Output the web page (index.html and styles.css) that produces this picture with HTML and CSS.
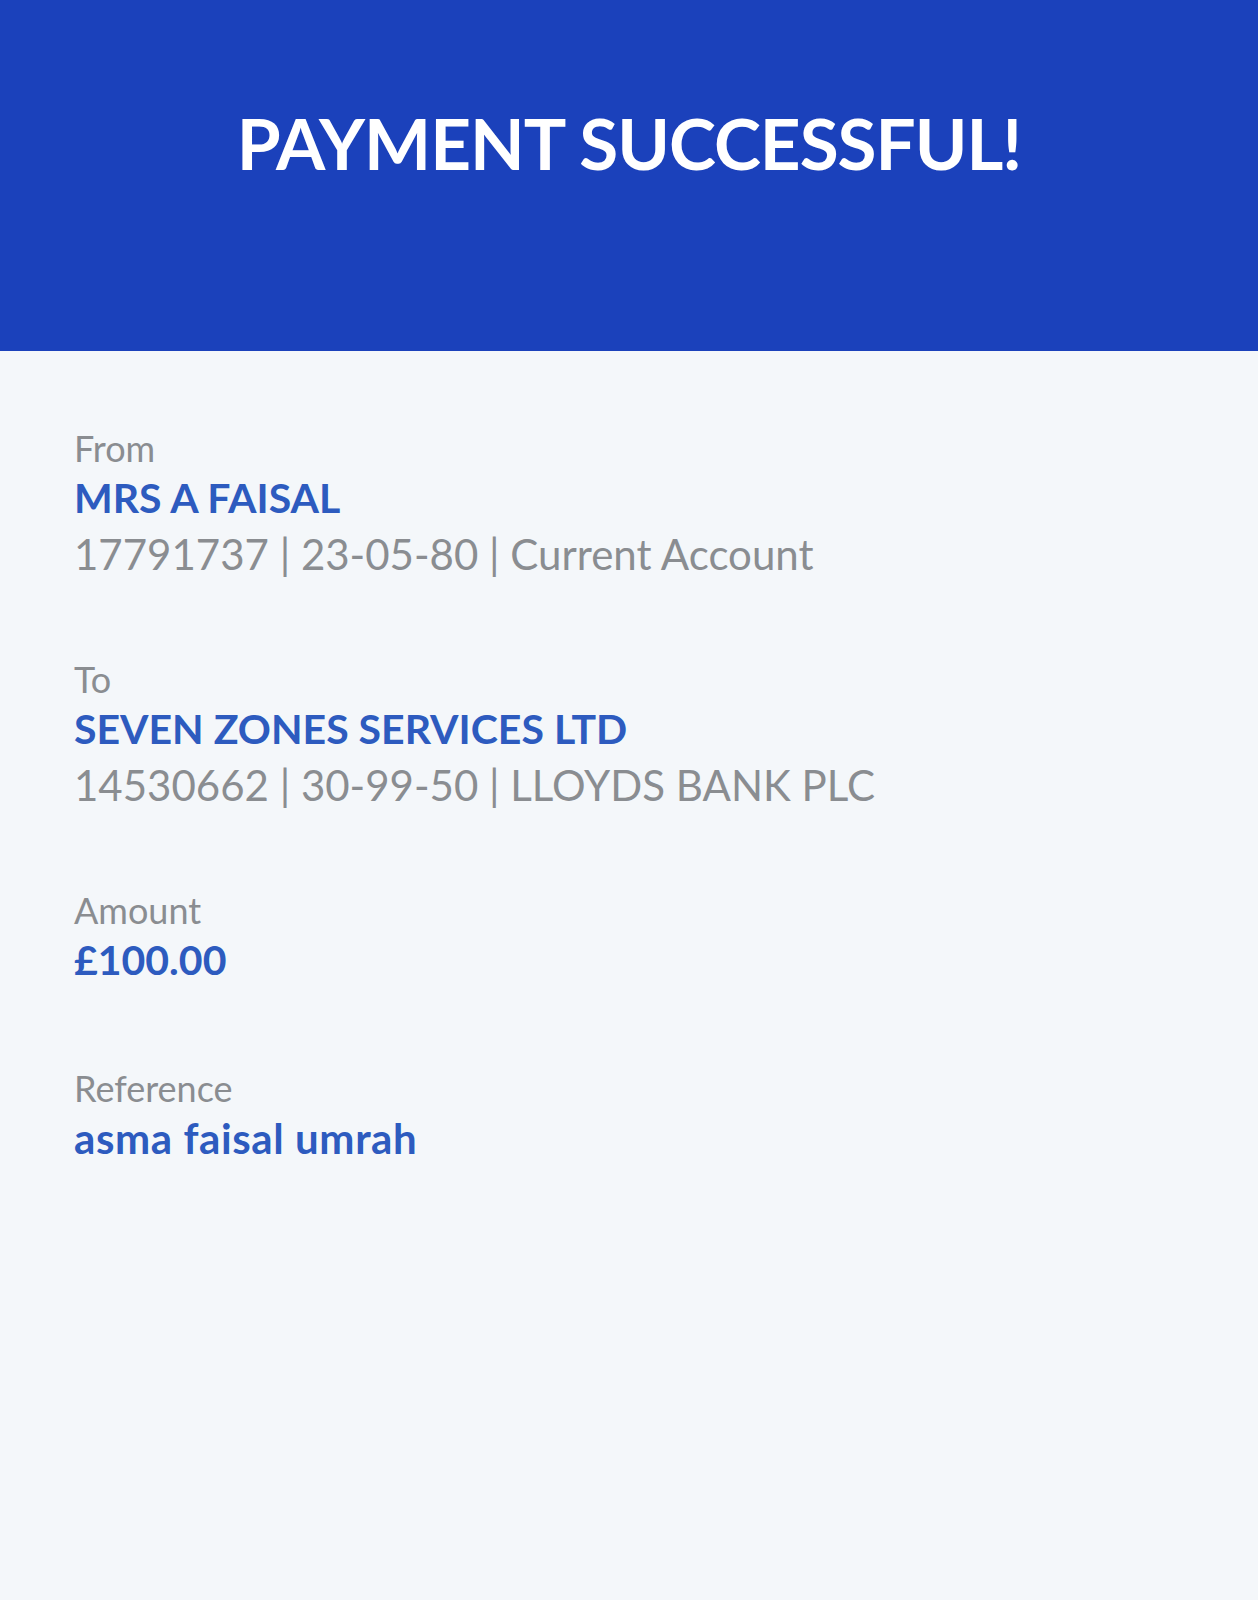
FILE: index.html
```html
<!DOCTYPE html>
<html lang="en">
<head>
<meta charset="utf-8">
<title>Payment Successful</title>
<link rel="stylesheet" href="styles.css">
</head>
<body>
<header class="banner">
  <h1 class="banner-title">PAYMENT SUCCESSFUL!</h1>
</header>
<main class="details">
  <section class="item">
    <div class="label">From</div>
    <div class="value">MRS A FAISAL</div>
    <div class="meta">17791737 | 23-05-80 | Current Account</div>
  </section>
  <section class="item">
    <div class="label">To</div>
    <div class="value">SEVEN ZONES SERVICES LTD</div>
    <div class="meta">14530662 | 30-99-50 | LLOYDS BANK PLC</div>
  </section>
  <section class="item item-short">
    <div class="label">Amount</div>
    <div class="value">£100.00</div>
  </section>
  <section class="item">
    <div class="label">Reference</div>
    <div class="value value-lower">asma faisal umrah</div>
  </section>
</main>
</body>
</html>
```

FILE: styles.css
```css
html, body {
  margin: 0;
  padding: 0;
}
body {
  background: #f4f7fa;
  font-family: Lato, "Open Sans", "Liberation Sans", sans-serif;
  min-height: 1600px;
}
.banner {
  background: #1b41bb;
  height: 351px;
  box-sizing: border-box;
  padding-top: 98px;
}
.banner-title {
  margin: 0;
  color: #ffffff;
  text-align: center;
  font-size: 71px;
  line-height: 90px;
  font-weight: 700;
  letter-spacing: -1px;
}
.details {
  padding: 75px 74px 0;
  display: flex;
  flex-direction: column;
  gap: 75px;
}
.item-short {
  margin-bottom: 3px;
}
.label {
  color: #8a8d91;
  font-size: 36px;
  line-height: 44px;
}
.value {
  color: #2d5bbf;
  font-size: 41px;
  line-height: 56px;
  font-weight: 700;
}
.value-lower {
  font-size: 42px;
  letter-spacing: 0.6px;
}
.meta {
  color: #8a8d91;
  font-size: 42px;
  line-height: 56px;
}
```
